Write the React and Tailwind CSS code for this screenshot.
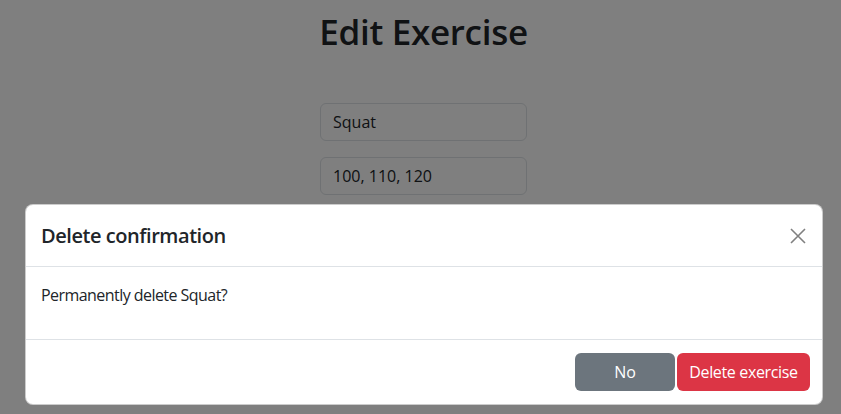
import React from "react";

const font = { fontFamily: '"Open Sans", "Noto Sans", sans-serif' };

export default function App() {
  return (
    <div className="relative h-[414px] w-full overflow-hidden bg-white text-[#212529]" style={font}>
      {/* Page */}
      <div className="flex flex-col items-center pl-[6px]">
        <h1 className="pt-[8px] text-[35px] font-semibold leading-[48px] tracking-[-0.3px]">Edit Exercise</h1>
        <div className="mt-[47px] flex w-[207px] flex-col gap-[16px]">
          <div className="flex h-[38px] items-center rounded-[6px] border border-[#dee2e6] px-[12px] text-[16px]">Squat</div>
          <div className="flex h-[38px] items-center rounded-[6px] border border-[#dee2e6] px-[12px] text-[16px]">100, 110, 120</div>
          <div className="flex h-[38px] items-center rounded-[6px] border border-[#dee2e6] px-[12px] text-[16px]">5</div>
          <div className="flex h-[38px] items-center rounded-[6px] border border-[#dee2e6] px-[12px] text-[16px]">3</div>
        </div>
        <div className="mt-[13px] h-[38px] w-[127px] rounded-[6px] bg-[#dc3545]" />
      </div>

      {/* Backdrop */}
      <div className="absolute inset-0 bg-black/50" />

      {/* Modal */}
      <div className="absolute inset-0 pt-[204px] pl-[25px]">
        <div className="w-[798px] overflow-hidden rounded-[8px] border border-black/20 bg-white">
          <div className="flex h-[62px] items-center justify-between border-b border-[#dee2e6] pl-[15px] pr-[16px]">
            <div className="text-[20px] font-semibold leading-[30px] tracking-[-0.45px]">Delete confirmation</div>
            <svg width="16" height="16" viewBox="0 0 16 16">
              <path d="M1 1 L15 15 M15 1 L1 15" stroke="#808080" strokeWidth="1.6" fill="none" />
            </svg>
          </div>
          <div className="pl-[15px] pr-[16px] pt-[16px] pb-[32px] text-[16px] leading-[24px] tracking-[-0.55px]">
            Permanently delete Squat?
          </div>
          <div className="flex h-[65px] items-center justify-end gap-[2px] border-t border-[#dee2e6] pr-[12px]">
            <button className="h-[38px] w-[100px] rounded-[6px] bg-[#6c757d] text-[16px] text-white">No</button>
            <button className="h-[38px] w-[133px] rounded-[6px] bg-[#dc3545] text-[16px] tracking-[-0.35px] text-white">Delete exercise</button>
          </div>
        </div>
      </div>
    </div>
  );
}
